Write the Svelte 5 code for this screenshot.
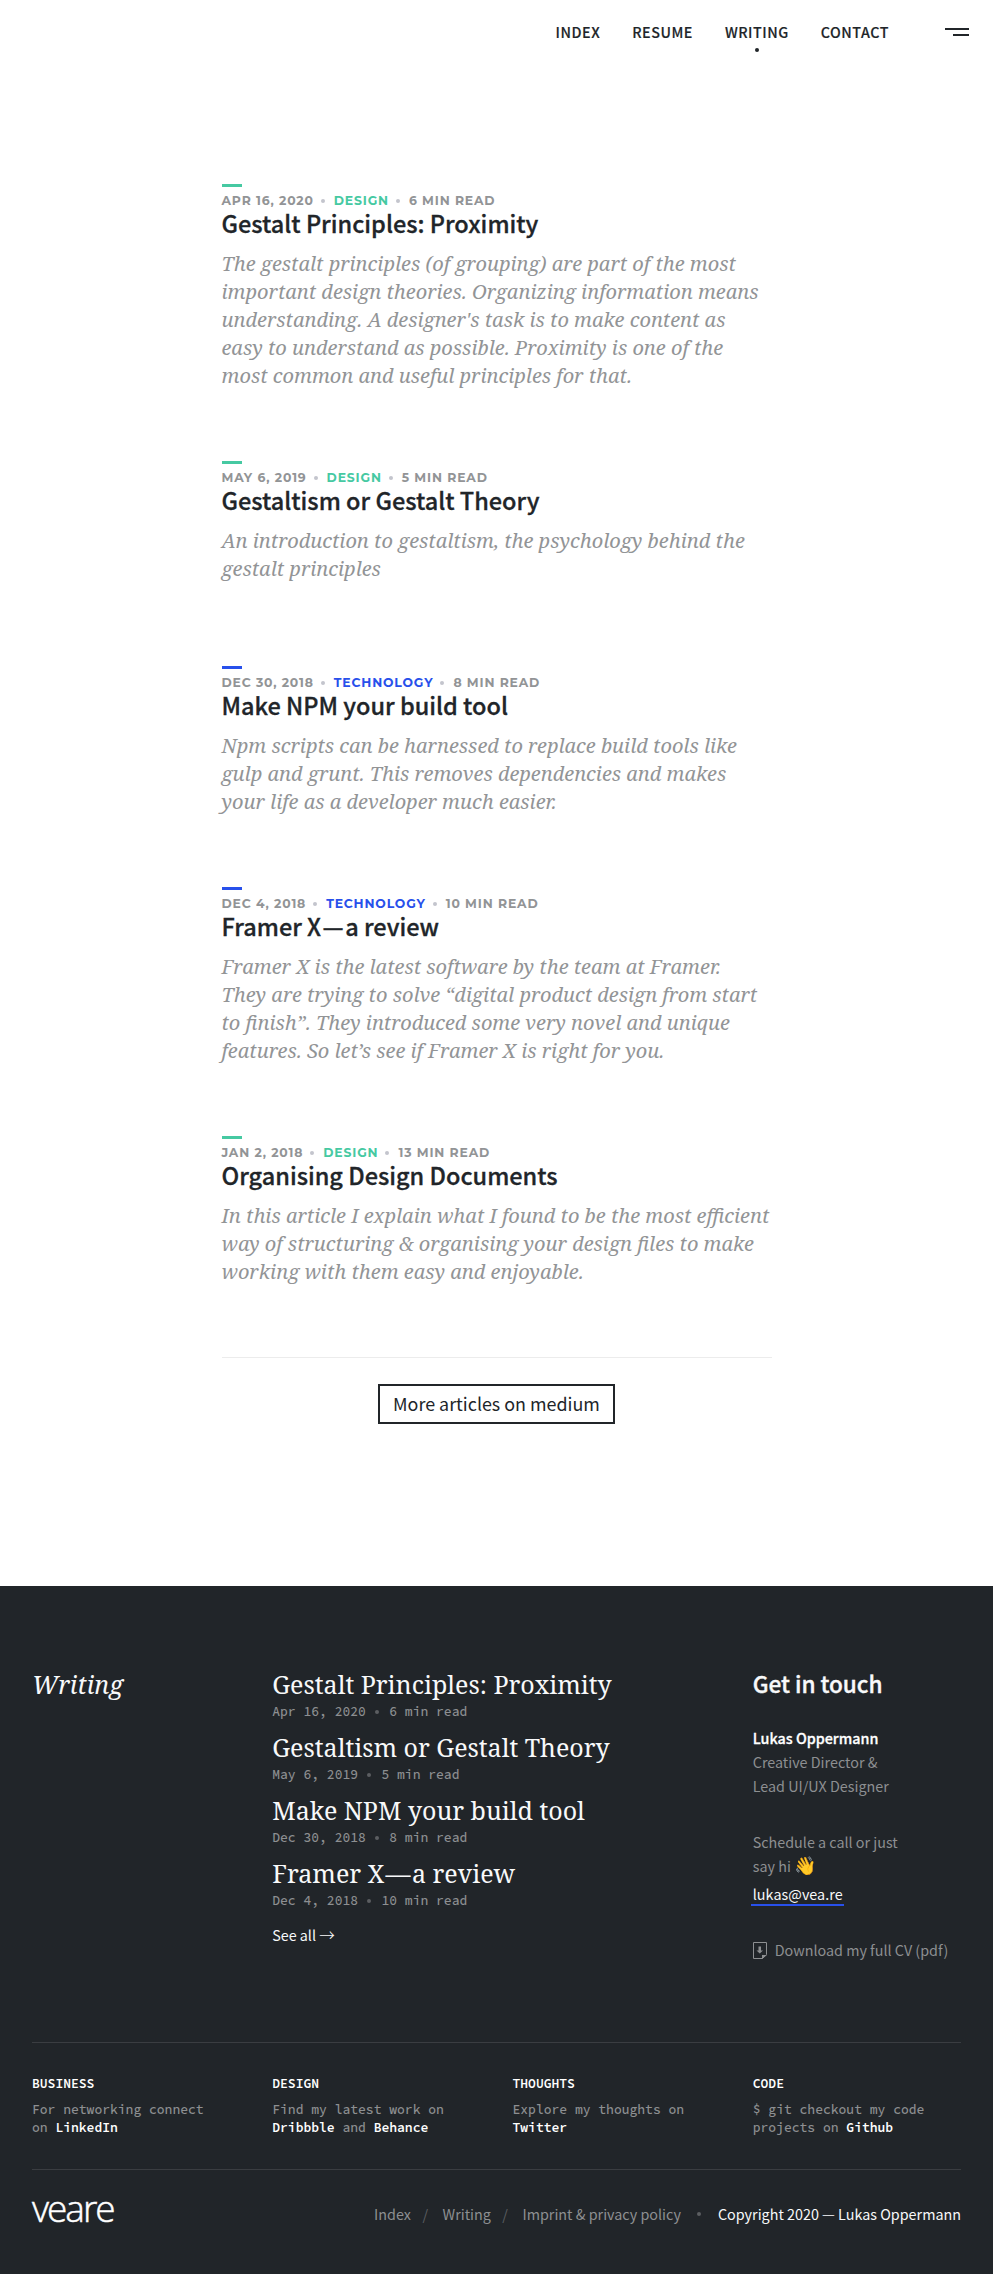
<script>
  const nav = ['Index', 'Resume', 'Writing', 'Contact'];
  const dash = '\u200a—\u200a';
  const articles = [
    { date: 'Apr 16, 2020', tag: 'Design', read: '6 min read', title: 'Gestalt Principles: Proximity',
      lines: ['The gestalt principles (of grouping) are part of the most', 'important design theories. Organizing information means', "understanding. A designer's task is to make content as", 'easy to understand as possible. Proximity is one of the', 'most common and useful principles for that.'] },
    { date: 'May 6, 2019', tag: 'Design', read: '5 min read', title: 'Gestaltism or Gestalt Theory',
      lines: ['An introduction to gestaltism, the psychology behind the', 'gestalt principles'] },
    { date: 'Dec 30, 2018', tag: 'Technology', read: '8 min read', title: 'Make NPM your build tool',
      lines: ['Npm scripts can be harnessed to replace build tools like', 'gulp and grunt. This removes dependencies and makes', 'your life as a developer much easier.'] },
    { date: 'Dec 4, 2018', tag: 'Technology', read: '10 min read', title: 'Framer X' + dash + 'a review',
      lines: ['Framer X is the latest software by the team at Framer.', 'They are trying to solve “digital product design from start', 'to finish”. They introduced some very novel and unique', 'features. So let’s see if Framer X is right for you.'] },
    { date: 'Jan 2, 2018', tag: 'Design', read: '13 min read', title: 'Organising Design Documents',
      lines: ['In this article I explain what I found to be the most efficient', 'way of structuring & organising your design files to make', 'working with them easy and enjoyable.'] }
  ];
</script>

<header>
  <nav>
    {#each nav as item}
      <a class:active={item === 'Writing'}>{item}</a>
    {/each}
  </nav>
  <button class="burger" aria-label="Menu"><span></span><span></span></button>
</header>

<main>
  {#each articles as a}
    <article class={a.tag.toLowerCase()}>
      <div class="meta"><span>{a.date}</span><i></i><span class="tag">{a.tag}</span><i></i><span>{a.read}</span></div>
      <h2>{a.title}</h2>
      <p>{#each a.lines as l}<span>{l}</span>{/each}</p>
    </article>
  {/each}
  <div class="more"><a>More articles on medium</a></div>
</main>

<footer>
  <section class="top">
    <h3 class="writing">Writing</h3>
    <div class="list">
      {#each articles.slice(0, 4) as a}
        <div class="entry">
          <h4>{#each a.title.split(dash) as part, k}{#if k}<span class="dash">—</span>{/if}{part}{/each}</h4>
          <div class="when">{a.date}<i></i>{a.read}</div>
        </div>
      {/each}
      <a class="all">See all <span>→</span></a>
    </div>
    <div class="touch">
      <h3>Get in touch</h3>
      <p><b>Lukas Oppermann</b><br />Creative Director &amp;<br />Lead UI/UX Designer</p>
      <p class="hi">Schedule a call or just<br />say hi <span class="wave">👋</span></p>
      <a class="mail">lukas@vea.re</a>
      <a class="cv">
        <svg width="14" height="17" viewBox="0 0 14 17"><path d="M.5.5h13v12l-4 4h-9z" fill="none" stroke="#8d8f91" /><path d="M9 17v-4h5z M5.5 4.5h2.500v4h2L6.750 11.5 3.500 8.500h2z" fill="#8d8f91" /></svg>
        Download my full CV (pdf)
      </a>
    </div>
  </section>
  <section class="social">
    <div><h5>BUSINESS</h5>For networking connect<br />on <b>LinkedIn</b></div>
    <div><h5>DESIGN</h5>Find my latest work on<br /><b>Dribbble</b> and <b>Behance</b></div>
    <div><h5>THOUGHTS</h5>Explore my thoughts on<br /><b>Twitter</b></div>
    <div><h5>CODE</h5>$ git checkout my code<br />projects on <b>Github</b></div>
  </section>
  <section class="bottom">
    <div class="logo">veare</div>
    <div class="links">
      <a>Index</a><em>/</em><a>Writing</a><em>/</em><a>Imprint &amp; privacy policy</a><i></i><span>Copyright 2020 — Lukas Oppermann</span>
    </div>
  </section>
</footer>

<style>
  :global(body) { background: #fff; }
  :global(#app) { font-family: 'Noto Sans CJK SC', sans-serif; color: #212529; width: 993px; }
  h2, h3, h4, h5, p { margin: 0; }
  a { white-space: nowrap; }

  header { display: flex; justify-content: flex-end; align-items: flex-start; height: 184px; box-sizing: border-box; padding: 20px 24px 0 0; }
  nav { display: flex; gap: 32px; }
  nav a { font-size: 14.3px; line-height: 24px; font-weight: 500; letter-spacing: 0.52px; text-transform: uppercase; display: flex; flex-direction: column; align-items: center; -webkit-text-stroke: 0.15px; }
  nav a.active::after { content: ''; width: 4px; height: 4px; border-radius: 50%; background: #212529; margin-top: 4px; }
  .burger { border: 0; background: none; padding: 0; margin: 8px 0 0 56px; width: 24px; display: flex; flex-direction: column; align-items: flex-end; gap: 4px; }
  .burger span { width: 24px; height: 2px; background: #212529; }
  .burger span + span { width: 16px; }

  main { width: 550px; margin: 0 auto; height: 1402px; }
  article { min-height: 205px; padding-bottom: 71px; box-sizing: border-box; --c: #46c9a2; }
  article::before { content: ''; display: block; width: 20px; height: 3px; background: var(--c); }
  article.technology { --c: #2850eb; }
  .meta { display: flex; align-items: center; margin-top: 5px; height: 18px; font: 700 12.4px/18px Montserrat, sans-serif; letter-spacing: 0.85px; text-transform: uppercase; color: #929496; }
  .meta i { width: 4px; height: 4px; border-radius: 50%; background: #c3c5cd; margin: 0 9px 0 7px; }
  .tag { color: var(--c); }
  h2 { font-size: 23.5px; line-height: 30px; font-weight: 500; white-space: nowrap; margin-top: -2px; -webkit-text-stroke: 0.3px; }
  p span { display: block; }
  article p { font: italic 20px/28px 'Noto Serif', serif; color: #929496; white-space: nowrap; padding-top: 12px; }
  .more { border-top: 1px solid #ececec; padding-top: 26px; display: flex; justify-content: center; }
  .more a { box-sizing: border-box; width: 237px; height: 40px; border: 2px solid #212529; font-size: 17.9px; line-height: 34px; text-align: center; }

  footer { background: #212529; height: 688px; box-sizing: border-box; padding: 81px 32px 0; color: #fff; }
  .top { display: grid; grid-template-columns: repeat(4, 1fr); column-gap: 32px; height: 375px; }
  .writing, h4 { font: 25px/34px 'Noto Serif', serif; color: #f8f9fa; }
  .writing { font-style: italic; }
  .list { grid-column: span 2; }
  .entry { height: 63px; }
  h4 { white-space: nowrap; }
  .dash { margin: 0 1.4px; }
  .when { margin-top: 2px; font: 500 13px/18px 'Source Code Pro', monospace; color: #8d8f91; display: flex; align-items: center; }
  .when i { width: 4px; height: 4px; border-radius: 50%; background: #5b5e61; margin: 0 10px 0 9.4px; }
  .all { display: block; margin-top: 4px; font-size: 14.3px; line-height: 24px; color: #f8f9fa; }
  .all span { font-size: 15.5px; line-height: 0; font-weight: 300; }
  .touch { font-size: 14.33px; line-height: 24px; color: #8d8f91; white-space: nowrap; }
  .touch h3 { font-size: 22.6px; line-height: 34px; font-weight: 500; letter-spacing: -0.05px; color: #f8f9fa; -webkit-text-stroke: 0.35px; }
  .touch p { margin-top: 25px; }
  .touch b { color: #fff; font-weight: 500; -webkit-text-stroke: 0.3px; }
  .touch .hi { margin-top: 32px; }
  .wave { display: inline; font-size: 18px; line-height: 0; }
  .mail { display: block; width: 93px; height: 24px; box-sizing: border-box; margin: 4px 0 0 -2px; padding-left: 2px; letter-spacing: 0.05px; color: #f8f9fa; border-bottom: 2px solid #2850eb; }
  .cv { display: flex; align-items: center; gap: 8px; margin-top: 32px; }

  .social { display: grid; grid-template-columns: repeat(4, 1fr); column-gap: 32px; border-top: 1px solid #3a3d41; border-bottom: 1px solid #3a3d41; padding-top: 32px; height: 94px; font: 500 13px/18px 'Source Code Pro', monospace; color: #8d8f91; white-space: nowrap; }
  .social h5 { font-size: 13px; font-weight: 600; line-height: 18px; color: #fff; margin-bottom: 8px; }
  .social b { font-weight: 600; color: #fff; }
  .bottom { display: flex; justify-content: space-between; align-items: flex-start; }
  .logo { font: 300 37px/40px 'Open Sans', sans-serif; letter-spacing: -2px; margin-top: 18px; -webkit-text-stroke: 0.5px; }
  .links { display: flex; align-items: center; font-size: 14.35px; line-height: 24px; padding-top: 32px; color: #8d8f91; }
  .links em { font-style: normal; color: #5b5e61; margin: 0 14.5px 0 11.5px; }
  .links i { width: 4px; height: 4px; border-radius: 50%; background: #5b5e61; margin: 0 17px 0 16px; }
  .links span { color: #f8f9fa; }
</style>
